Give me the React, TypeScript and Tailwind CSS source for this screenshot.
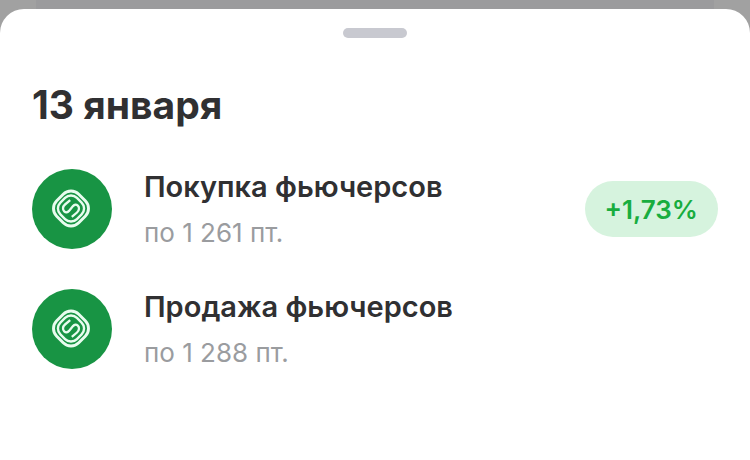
import React from 'react';

interface Trade {
  title: string;
  price: string;
  change?: string;
}

const trades: Trade[] = [
  { title: 'Покупка фьючерсов', price: 'по 1 261 пт.', change: '+1,73%' },
  { title: 'Продажа фьючерсов', price: 'по 1 288 пт.' },
];

const SberLogo: React.FC = () => (
  <svg viewBox="-19 -19.5 40 40" className="size-10" fill="none" stroke="#e8fcef" aria-hidden="true">
    <rect x="-15.6" y="-15.6" width="31.2" height="31.2" rx="11" strokeWidth="2.9" transform="rotate(45)" />
    <rect x="-11.7" y="-11.7" width="23.4" height="23.4" rx="8.4" strokeWidth="2.4" transform="rotate(45)" />
    <path
      d="M-.8 -8.4L-6 -4C-8.5 -1.8 -8.5 1.2 -6.8 2.8C-5.1 4.4 -3.4 3.9 -2 2.4L2 -2.4C3.4 -3.9 5.1 -4.4 6.8 -2.8C8.5 -1.2 8.5 1.8 6 4L.8 8.4"
      strokeWidth="2.3"
    />
  </svg>
);

const TradeRow: React.FC<{ trade: Trade }> = ({ trade }) => (
  <li className="flex items-center gap-8">
    <div className="flex size-20 shrink-0 items-center justify-center rounded-full bg-[#189444]">
      <SberLogo />
    </div>
    <div className="min-w-0 flex-1">
      <h2 className="text-[29px] leading-10 font-semibold text-[#303032]">{trade.title}</h2>
      <p className="mt-2 text-[26px] leading-9 text-[#9a9c9f]">{trade.price}</p>
    </div>
    {trade.change && (
      <span className="flex h-14 shrink-0 items-center rounded-full bg-[#d6f3de] px-5 text-[26px] font-semibold text-[#18ad3e]">
        {trade.change}
      </span>
    )}
  </li>
);

export default function App() {
  return (
    <div className="flex min-h-screen flex-col bg-[#a1a1a1] font-['Inter','Liberation_Sans',sans-serif]">
      {/* Edge of the dimmed card behind the sheet */}
      <div className="mx-9 h-[9px] bg-[#9b9b9d]" />
      <main className="flex-1 rounded-t-3xl bg-white px-8 pt-[19px] pb-8">
        <div className="mx-auto h-[10px] w-16 rounded-full bg-[#c8c9d0]" />
        <h1 className="mt-[43px] text-[39px] leading-[48px] font-bold text-[#303032]">13 января</h1>
        <ul className="mt-[38px] space-y-9">
          {trades.map((trade) => (
            <TradeRow key={trade.title} trade={trade} />
          ))}
        </ul>
      </main>
    </div>
  );
}
